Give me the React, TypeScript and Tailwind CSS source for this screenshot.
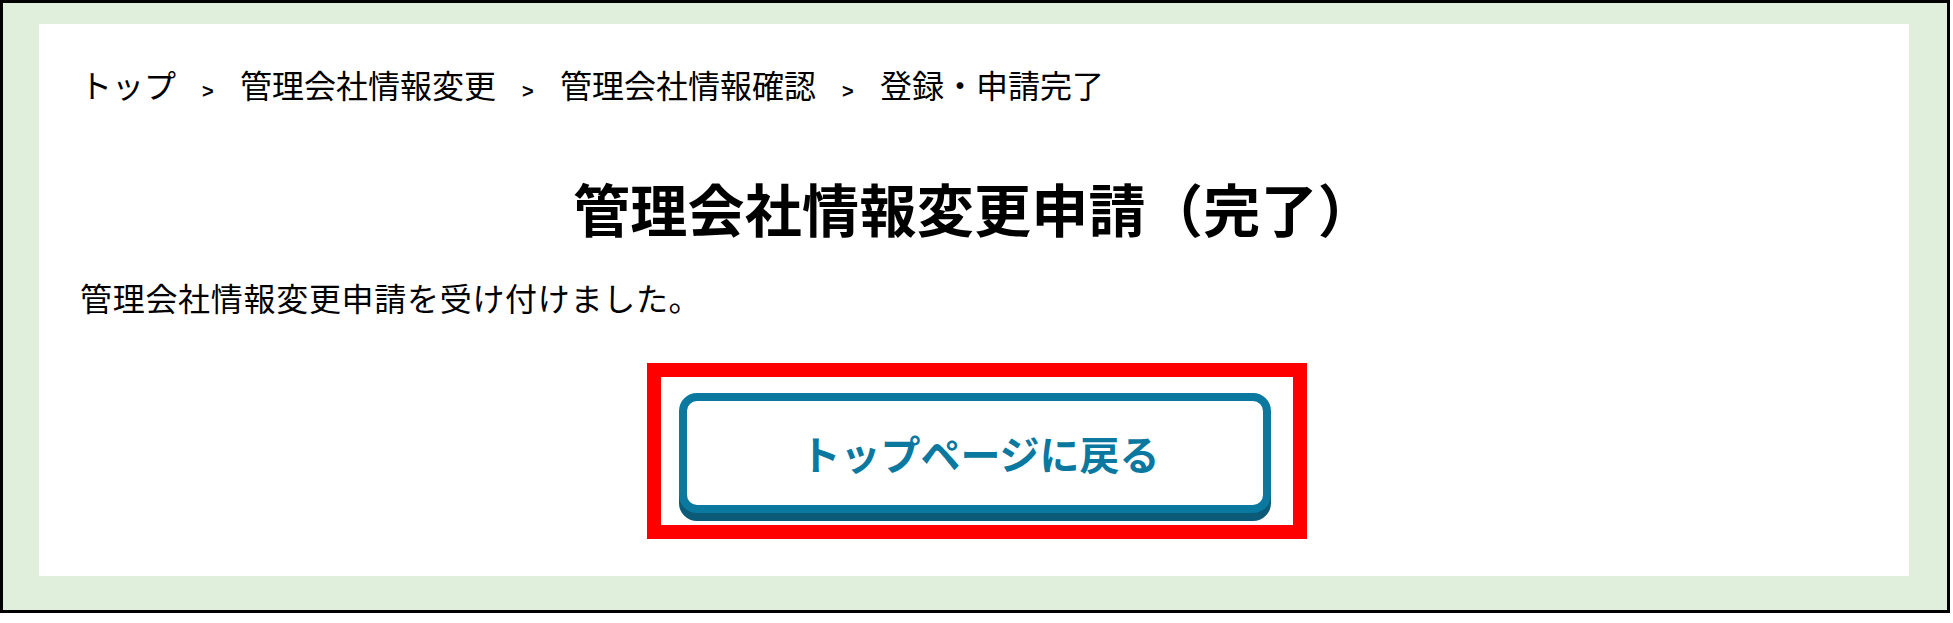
import React from "react";

const crumbs = ["トップ", "管理会社情報変更", "管理会社情報確認", "登録・申請完了"];

const jp = { fontFamily: '"Noto Sans CJK JP", "Noto Sans", sans-serif' };

export default function App() {
  return (
    <div className="w-[1953px] h-[623px] bg-white" style={jp}>
      <div className="w-[1950px] h-[613px] border-[3px] border-black bg-[#dfefdc] pt-[21px] pl-[36px] pr-[38px] pb-[34px]">
        <div className="w-[1870px] h-[552px] bg-white pt-[40px] px-[41px] text-black">
          {/* breadcrumb */}
          <nav className="flex items-baseline gap-[26px] text-[32px] leading-[40px]">
            {crumbs.map((c, i) => (
              <React.Fragment key={c}>
                {i > 0 && (
                  <span
                    className="text-[20px] font-semibold w-[12px]"
                    style={{ fontFamily: '"Liberation Sans", Arial, sans-serif' }}
                  >
                    &gt;
                  </span>
                )}
                <span>{c}</span>
              </React.Fragment>
            ))}
          </nav>

          <h1 className="mt-[68px] text-center text-[57px] leading-[57px] font-bold tracking-[0.3px]">
            管理会社情報変更申請（完了）
          </h1>

          <p className="mt-[41px] text-[32px] leading-[40px] tracking-[0.7px]">
            管理会社情報変更申請を受け付けました。
          </p>

          <div className="mt-[46px] flex justify-center pl-[6px]">
            <div className="border-[14px] border-[#ff0000] pt-[16px] pb-[12px] pl-[18px] pr-[22px]">
              <button className="w-[592px] h-[120px] rounded-[18px] border-[8px] border-[#0a789f] bg-white shadow-[0_8px_0_#0b5a78] flex items-center justify-center text-[40px] leading-[40px] font-bold text-[#0a789f] pl-[10px]">
                トップページに戻る
              </button>
            </div>
          </div>
        </div>
      </div>
    </div>
  );
}
